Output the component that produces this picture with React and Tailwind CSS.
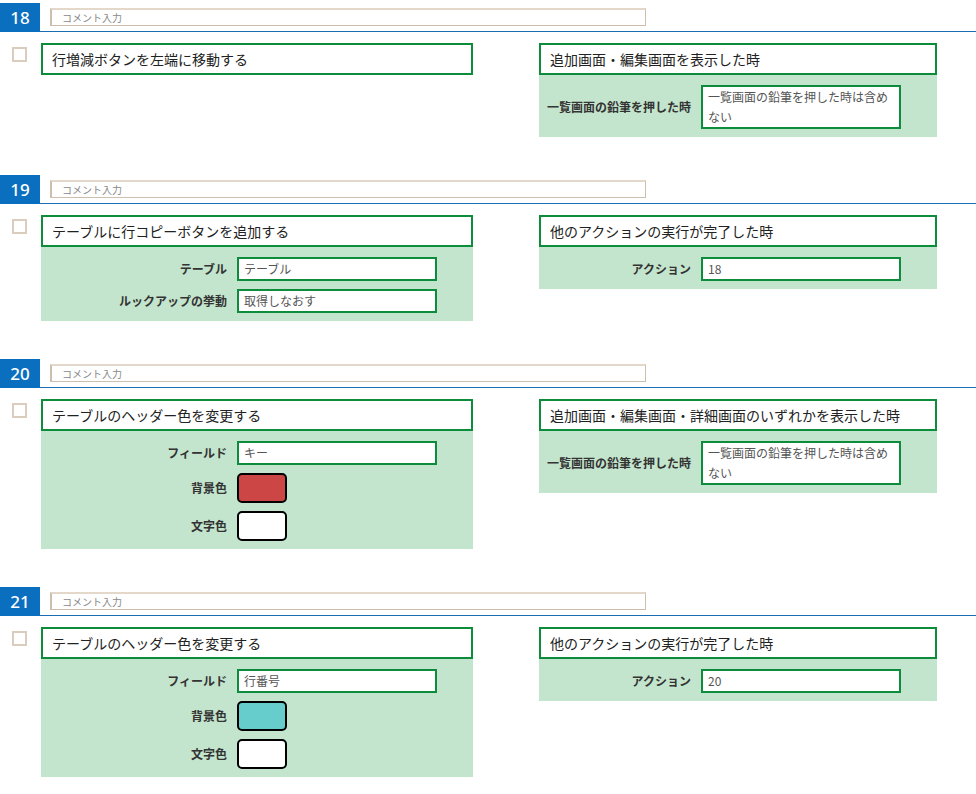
const sections = [
  {
    no: 18,
    left: { title: '行増減ボタンを左端に移動する', rows: [] },
    right: {
      title: '追加画面・編集画面を表示した時',
      rows: [{ label: '一覧画面の鉛筆を押した時', value: '一覧画面の鉛筆を押した時は含めない', tall: true }],
    },
  },
  {
    no: 19,
    left: {
      title: 'テーブルに行コピーボタンを追加する',
      rows: [
        { label: 'テーブル', value: 'テーブル' },
        { label: 'ルックアップの挙動', value: '取得しなおす' },
      ],
    },
    right: {
      title: '他のアクションの実行が完了した時',
      rows: [{ label: 'アクション', value: '18' }],
    },
  },
  {
    no: 20,
    left: {
      title: 'テーブルのヘッダー色を変更する',
      rows: [
        { label: 'フィールド', value: 'キー' },
        { label: '背景色', color: '#cc4646' },
        { label: '文字色', color: '#ffffff' },
      ],
    },
    right: {
      title: '追加画面・編集画面・詳細画面のいずれかを表示した時',
      rows: [{ label: '一覧画面の鉛筆を押した時', value: '一覧画面の鉛筆を押した時は含めない', tall: true }],
    },
  },
  {
    no: 21,
    left: {
      title: 'テーブルのヘッダー色を変更する',
      rows: [
        { label: 'フィールド', value: '行番号' },
        { label: '背景色', color: '#66cccc' },
        { label: '文字色', color: '#ffffff' },
      ],
    },
    right: {
      title: '他のアクションの実行が完了した時',
      rows: [{ label: 'アクション', value: '20' }],
    },
  },
];

function Card({ data, width, labelWidth }) {
  return (
    <div className={width}>
      <div className="h-[32px] border-2 border-[#0d8c3c] bg-white flex items-center pl-[9px] text-[14px] text-[#222]">
        {data.title}
      </div>
      {data.rows.length > 0 && (
        <div className="bg-[#c3e5cd] pt-[10px] pb-[8px] flex flex-col gap-[8px]">
          {data.rows.map((r, i) => (
            <div key={i} className="flex items-center">
              <div className={`${labelWidth} text-right text-[12px] font-bold text-[#333]`}>{r.label}</div>
              {r.color ? (
                <div
                  className="ml-[10px] w-[50px] h-[30px] border-2 border-black rounded-[5px]"
                  style={{ backgroundColor: r.color }}
                />
              ) : (
                <div
                  className={`ml-[10px] w-[200px] border-2 border-[#0d8c3c] bg-white px-[5px] text-[12px] text-[#555] ${
                    r.tall ? 'h-[44px] leading-[20px]' : 'h-[24px] leading-[20px]'
                  }`}
                >
                  {r.value}
                </div>
              )}
            </div>
          ))}
        </div>
      )}
    </div>
  );
}

function Section({ s }) {
  return (
    <div className="mb-[38px]">
      <div className="flex">
        <div className="w-[40px] h-[29px] bg-[#0b6fbf] text-white text-[17px] font-medium flex items-center justify-center font-['Noto_Sans',sans-serif]">
          {s.no}
        </div>
        <div className="flex-1 h-[29px] border-b border-[#1b6db3] pl-[10px] pt-[5px]">
          <div className="w-[596px] h-[18px] border border-[#cdbfab] border-t-2 border-l-2 border-t-[#e3d8ca] bg-white pl-[10px] text-[10px] leading-[16px] text-[#888]">
            コメント入力
          </div>
        </div>
      </div>
      <div className="flex items-start pl-[12px] mt-[11px]">
        <div className="w-[15px] h-[15px] mt-[4px] border-2 border-[#dacdbd] bg-white" />
        <div className="ml-[14px]">
          <Card data={s.left} width="w-[432px]" labelWidth="w-[186px]" />
        </div>
        <div className="ml-[66px]">
          <Card data={s.right} width="w-[398px]" labelWidth="w-[152px]" />
        </div>
      </div>
    </div>
  );
}

export default function App() {
  return (
    <div className="w-[976px] min-h-[794px] bg-white pt-[3px] font-['Noto_Sans_CJK_JP','Noto_Sans',sans-serif]">
      {sections.map(s => (
        <Section key={s.no} s={s} />
      ))}
    </div>
  );
}
